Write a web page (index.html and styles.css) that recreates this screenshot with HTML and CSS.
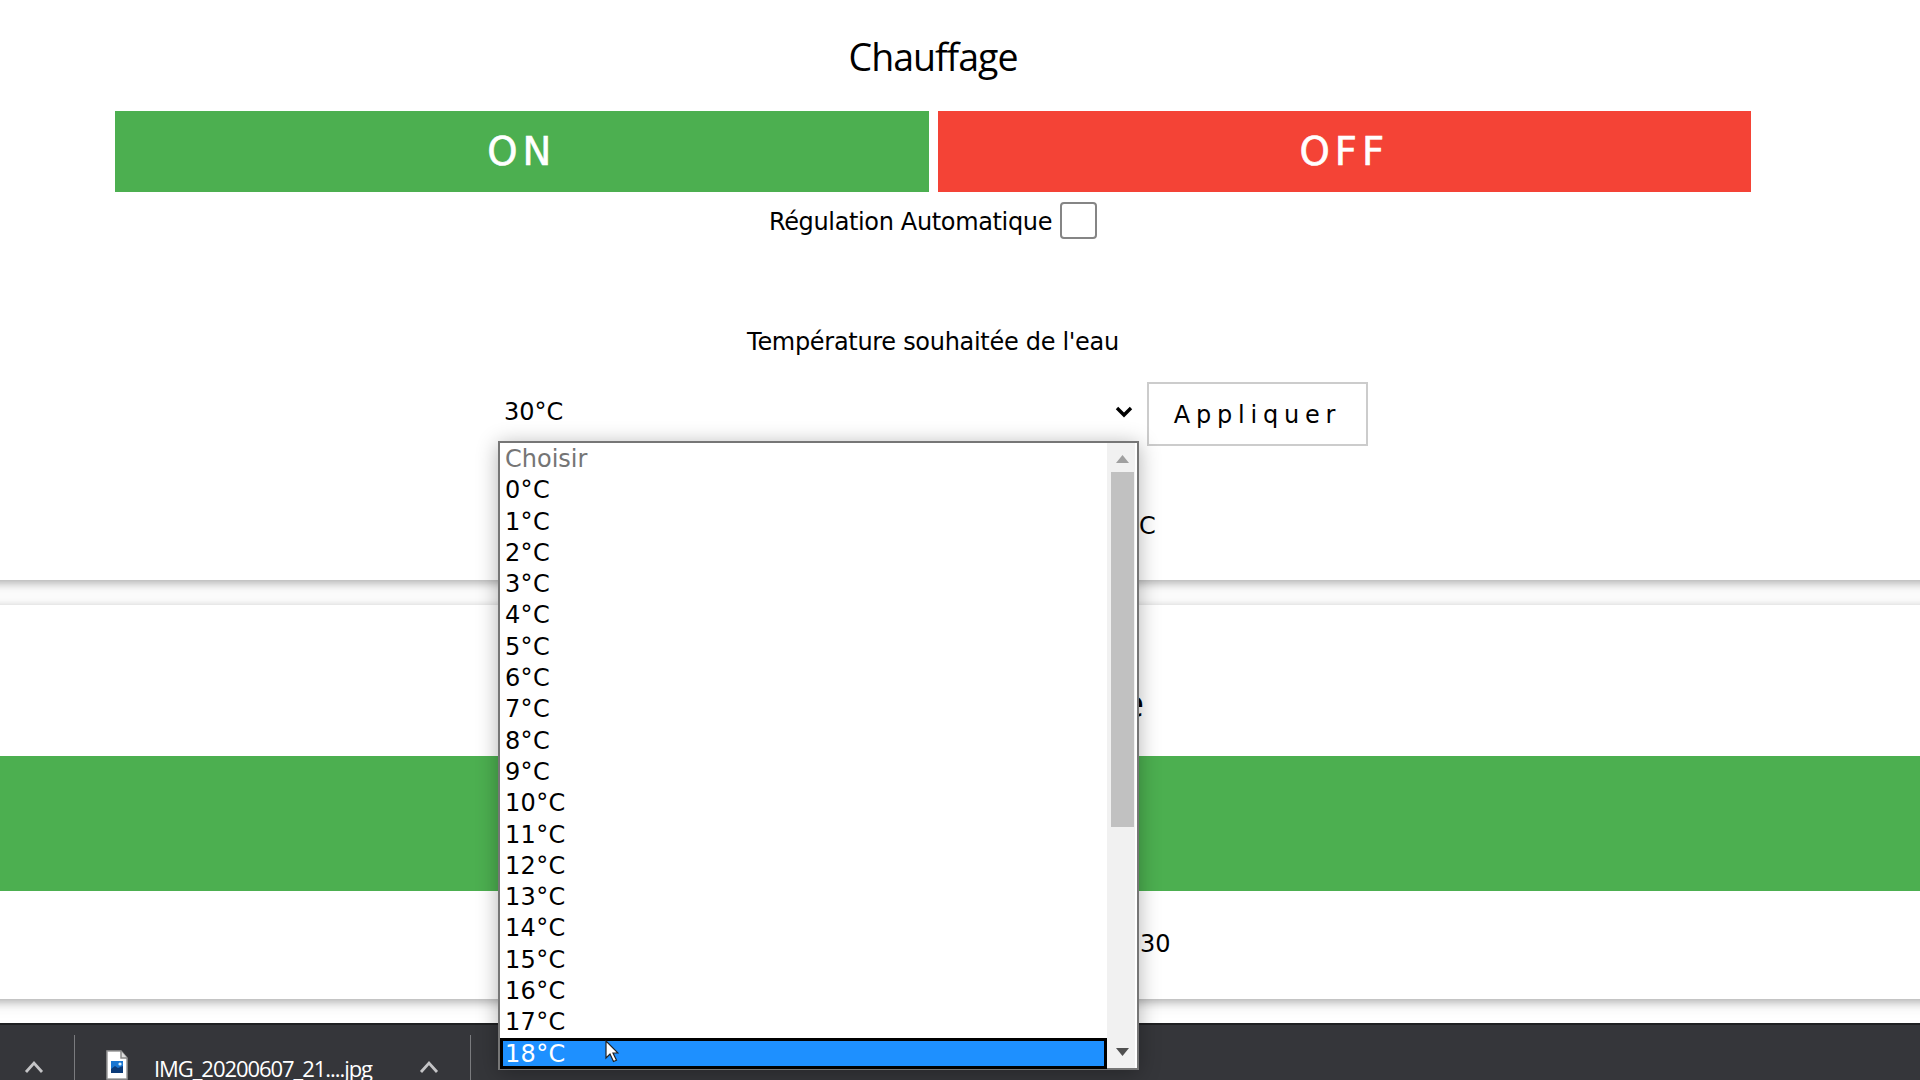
FILE: index.html
```
<!DOCTYPE html>
<html lang="fr">
<head>
<meta charset="utf-8">
<title>Chauffage</title>
<link rel="stylesheet" href="styles.css">
</head>
<body>
<main class="page">
  <section class="card heating">
    <h1 class="title"><span>Chauffage</span></h1>
    <div class="switches">
      <button class="btn btn-on"><span>ON</span></button>
      <button class="btn btn-off"><span>OFF</span></button>
    </div>
    <label class="auto"><span class="auto-text">Régulation Automatique</span><input class="check" type="checkbox"></label>
    <p class="caption"><span>Température souhaitée de l'eau</span></p>
    <div class="target">
      <div class="select"><span>30°C</span>
        <svg class="chevron" viewBox="0 0 18 14"><path d="M2 3l7 7 7-7" fill="none" stroke="#000" stroke-width="3.4"/></svg>
      </div>
      <button class="apply"><span>Appliquer</span></button>
    </div>
    <p class="reading">C</p>
  </section>
  <section class="card second">
    <h2 class="subtitle">e</h2>
    <div class="band"></div>
    <p class="value">30</p>
  </section>
</main>
<footer class="downloads">
  <svg class="caret first" viewBox="0 0 20 14"><path d="M2 12l8-9 8 9" fill="none" stroke="#c4c4c6" stroke-width="2.8"/></svg>
  <span class="divider"></span>
  <svg class="file" viewBox="0 0 22 30"><path d="M1 1h14l6 7v21H1z" fill="#fff" stroke="#9a9a9a" stroke-width="1.5"/><path d="M15 1v7h6" fill="#ddd" stroke="#888" stroke-width="1.5"/><path d="M5 11h12v12H5z" fill="#1976d2"/><path d="M5 19l4-3 3 2 5-2v7H5z" fill="#0b3a78"/><circle cx="14" cy="14" r="1.6" fill="#d9f1ff"/></svg>
  <span class="filename">IMG_20200607_21....jpg</span>
  <svg class="caret" viewBox="0 0 20 14"><path d="M2 12l8-9 8 9" fill="none" stroke="#c4c4c6" stroke-width="2.8"/></svg>
  <span class="divider last"></span>
</footer>
<div class="popup">
  <ul class="options">
    <li class="muted">Choisir</li><li>0°C</li><li>1°C</li><li>2°C</li><li>3°C</li><li>4°C</li><li>5°C</li><li>6°C</li><li>7°C</li><li>8°C</li><li>9°C</li><li>10°C</li><li>11°C</li><li>12°C</li><li>13°C</li><li>14°C</li><li>15°C</li><li>16°C</li><li>17°C</li><li class="active">18°C</li>
  </ul>
  <div class="scrollbar">
    <svg class="arrow" viewBox="0 0 13 8"><path d="M0 8l6.500-8 6.500 8z" fill="#a0a0a0"/></svg>
    <div class="thumb"></div>
    <svg class="arrow down" viewBox="0 0 13 8"><path d="M0 0h13l-6.500 8z" fill="#505050"/></svg>
  </div>
</div>
<svg class="cursor" viewBox="0 0 14 23"><path d="M1 1v17l4-4 3.500 7.500 3-1.300-3.500-7.200h5z" fill="#fff" stroke="#222" stroke-width="1.200"/></svg>
</body>
</html>
```
FILE: styles.css
```
* { box-sizing: border-box; }
body {
  margin: 0;
  width: 1920px;
  height: 1080px;
  overflow: hidden;
  position: relative;
  display: flex;
  flex-direction: column;
  background: #fff;
  color: #000;
  font: 24px/30px "DejaVu Sans", Verdana, sans-serif;
}
h1, h2, p, ul { margin: 0; padding: 0; font-weight: 400; }
button { font: inherit; padding: 0; border: 0; }
.page { height: 1023px; display: flex; flex-direction: column; gap: 25px; overflow: hidden; }
.card { margin: 0 -20px; padding: 0 20px; box-shadow: 0 3px 8px rgba(0,0,0,.22), 0 3px 16px rgba(0,0,0,.14); }
.heating { height: 580px; padding-left: 135px; padding-right: 189px; display: flex; flex-direction: column; }
.title {
  height: 111px;
  padding-top: 31px;
  text-align: center;
  font: 37.5px/52px "Open Sans", "Segoe UI", sans-serif;
  letter-spacing: -1px;
}
.switches { height: 81px; display: flex; gap: 9px; }
.btn { flex: 1; color: #fff; font-size: 38.5px; letter-spacing: 5px; -webkit-text-stroke: .6px #fff; }
.btn-on { background: #4caf50; }
.btn-off { background: #f44336; }
.auto { height: 56px; display: flex; justify-content: center; align-items: center; gap: 8px; letter-spacing: -.35px; }
.auto-text { padding-top: 3px; }
.check { appearance: none; width: 37px; height: 37px; margin: 0; border: 2px solid #858585; border-radius: 4px; background: #fff; }
.caption { height: 134px; padding-top: 79px; text-align: center; letter-spacing: -.3px; }
.target { height: 64px; padding-left: 383px; display: flex; gap: 8px; }
.select { width: 641px; height: 60px; padding: 0 6px 0 6px; display: flex; justify-content: space-between; align-items: center; }
.chevron { width: 18px; height: 14px; }
.apply { width: 221px; padding-top: 2px; border: 2px solid #ccc; background: #fff; letter-spacing: 5.800px; color: #000; }
.reading { padding: 65px 0 0 1024px; }
.second { height: 394px; }
.subtitle { height: 151px; padding: 72px 0 0 1123px; font: 37.5px/52px "Open Sans", "Segoe UI", sans-serif; }
.band { height: 135px; margin: 0 -20px; background: #4caf50; }
.value { padding: 38px 0 0 1140px; }
.downloads {
  height: 57px;
  padding: 12px 0 0 24px;
  display: flex;
  background: #35363a;
  border-top: 2px solid #1f2022;
  color: #fff;
}
.caret { width: 20px; height: 14px; margin-top: 23px; }
.divider { width: 1px; height: 60px; margin: -2px 0 0 30px; background: #7a7b7e; }
.file { width: 22px; height: 30px; margin: 13px 0 0 31px; }
.filename { width: 222px; margin: 15px 0 0 26px; white-space: nowrap; font: 22px/32px "Open Sans", "Segoe UI", sans-serif; letter-spacing: -1.050px; }
.downloads .filename + .caret { margin-left: 43px; }
.divider.last { margin-left: 31px; }
.popup {
  position: absolute;
  left: 498px;
  top: 441px;
  width: 641px;
  height: 629px;
  display: flex;
  background: #fff;
  border: 2px solid #767676;
  box-shadow: 0 3px 20px rgba(0,0,0,.3);
}
.options { flex: 1; list-style: none; }
.options li { height: 31.300px; padding: 1px 0 0 5px; line-height: 31.300px; letter-spacing: .350px; }
.options .muted { color: #757575; letter-spacing: 0; }
.options .active { border: 3px solid #000; padding: 0 0 0 2px; line-height: 26px; background: #1e90ff; color: #fff; }
.scrollbar { width: 30px; background: #f1f1f1; border-right: 2px solid #fff; display: flex; flex-direction: column; align-items: flex-end; padding: 12px 1px 12px 0; }
.arrow { width: 13px; height: 8px; margin-right: 5px; }
.thumb { width: 23px; height: 355px; margin-top: 9px; background: #c1c1c1; }
.arrow.down { margin-top: auto; }
.cursor { position: absolute; left: 605px; top: 1040px; width: 14px; height: 23px; }
```
